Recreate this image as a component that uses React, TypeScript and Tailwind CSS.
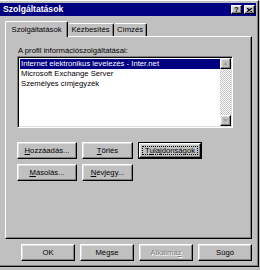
import type { ReactNode } from "react";

const raised =
  "bg-[#c0c0c0] border border-t-white border-l-white border-r-black border-b-black shadow-[inset_-1px_-1px_#808080,inset_1px_1px_#dfdfdf]";

const Btn = ({
  children,
  w,
  def,
  disabled,
}: {
  children: ReactNode;
  w: string;
  def?: boolean;
  disabled?: boolean;
}) => {
  if (def) {
    return (
      <div className={`${w} h-[17px] border border-black flex`}>
        <div className={`flex-1 flex p-[2px] ${raised}`}>
          <div className="flex-1 flex items-center justify-center border border-dotted border-black">
            {children}
          </div>
        </div>
      </div>
    );
  }
  return (
    <div
      className={`${w} h-[17px] flex items-center justify-center ${raised} ${
        disabled ? "text-[#808080] [text-shadow:1px_1px_0_#fff]" : ""
      }`}
    >
      {children}
    </div>
  );
};

const Arrow = ({ up }: { up?: boolean }) => (
  <div className={`h-[11px] flex items-center justify-center ${raised}`}>
    <svg width="5" height="3" viewBox="0 0 5 3">
      <path d={up ? "M2.5 0L5 3H0Z" : "M0 0H5L2.5 3Z"} fill="#a0a0a0" />
    </svg>
  </div>
);

const U = ({ children }: { children: ReactNode }) => (
  <span className="underline underline-offset-1">{children}</span>
);

export default function App() {
  return (
    <div className="w-[260px] h-[270px] bg-[#c0c0c0] flex overflow-hidden text-[7.7px] text-black font-['Liberation_Sans',Arial,sans-serif]">
      {/* Dialog */}
      <div className="w-[259px] h-[267px] shrink-0 flex flex-col pt-[2px] pr-[2px] border-t border-t-white border-r border-b border-r-black border-b-black shadow-[inset_-1px_-1px_#808080]">
        {/* Title bar */}
        <div className="h-[13px] bg-[#000080] flex items-center justify-between pl-[3px] pr-[1px]">
          <span className="text-white font-bold text-[8.6px]">Szolgáltatások</span>
          <div className="flex gap-[2px]">
            <div className={`w-[11px] h-[9px] flex items-center justify-center ${raised}`}>
              <span className="font-bold text-[7px] leading-none">?</span>
            </div>
            <div className={`w-[11px] h-[9px] flex items-center justify-center ${raised}`}>
              <svg width="5" height="4" viewBox="0 0 5 4">
                <path d="M0 0L5 4M5 0L0 4" stroke="#000" strokeWidth="1.2" />
              </svg>
            </div>
          </div>
        </div>

        {/* Tabs */}
        <div className="mt-[5px] h-[15px] flex items-end ml-[5px]">
          <div className="relative z-10 w-[63px] h-[16px] -mb-px flex items-center justify-center bg-[#c0c0c0] border-t border-l border-r border-t-white border-l-white border-r-black rounded-t-[2px] shadow-[inset_-1px_0_#808080]">
            Szolgáltatások
          </div>
          <div className="w-[46px] h-[13px] flex items-center justify-center border-t border-r border-t-white border-r-black rounded-t-[2px] shadow-[inset_-1px_0_#808080]">
            Kézbesítés
          </div>
          <div className="w-[33px] h-[13px] flex items-center justify-center border-t border-r border-t-white border-r-black rounded-t-[2px] shadow-[inset_-1px_0_#808080]">
            Címzés
          </div>
        </div>

        {/* Panel */}
        <div className="ml-[5px] mr-[4px] h-[203px] border border-t-white border-l-white border-r-black border-b-black shadow-[inset_-1px_-1px_#808080] pt-[8px] pl-[11px]">
          <div className="h-[11px] leading-[11px] pl-[1px]">A profil információszolgáltatásai:</div>
          <div className="w-[216px] h-[72px] bg-white flex border border-t-[#808080] border-l-[#808080] border-r-white border-b-white shadow-[inset_1px_1px_#000,inset_-1px_-1px_#dfdfdf] p-[1px] pt-[2px] pl-[2px]">
            <div className="flex-1 flex flex-col">
              <div className="h-[10px] leading-[10px] bg-[#000080] text-white pl-[1px]">
                Internet elektronikus levelezés - Inter.net
              </div>
              <div className="h-[10px] leading-[10px] pl-[1px]">Microsoft Exchange Server</div>
              <div className="h-[10px] leading-[10px] pl-[1px]">Személyes címjegyzék</div>
            </div>
            <div className="w-[11px] flex flex-col -mt-px">
              <Arrow up />
              <div className="flex-1 bg-[repeating-conic-gradient(#c0c0c0_0_25%,#fff_0_50%)] bg-[length:2px_2px]" />
              <Arrow />
            </div>
          </div>

          <div className="mt-[14px] flex gap-[5px]">
            <Btn w="w-[60px]">
              <U>H</U>ozzáadás...
            </Btn>
            <Btn w="w-[51px]">
              <U>T</U>örlés
            </Btn>
            <Btn w="w-[64px]" def>
              T<U>u</U>lajdonságok
            </Btn>
          </div>
          <div className="mt-[5px] flex gap-[5px]">
            <Btn w="w-[60px]">
              <U>M</U>ásolás...
            </Btn>
            <Btn w="w-[51px]">
              <U>N</U>évjegy...
            </Btn>
          </div>
        </div>

        {/* Bottom buttons */}
        <div className="mt-[5px] mr-[4px] flex justify-end gap-[5px]">
          <Btn w="w-[54px]">OK</Btn>
          <Btn w="w-[54px]">Mégse</Btn>
          <Btn w="w-[54px]" disabled>
            Alkalma<U>z</U>
          </Btn>
          <Btn w="w-[54px]">Súgó</Btn>
        </div>
      </div>
    </div>
  );
}
